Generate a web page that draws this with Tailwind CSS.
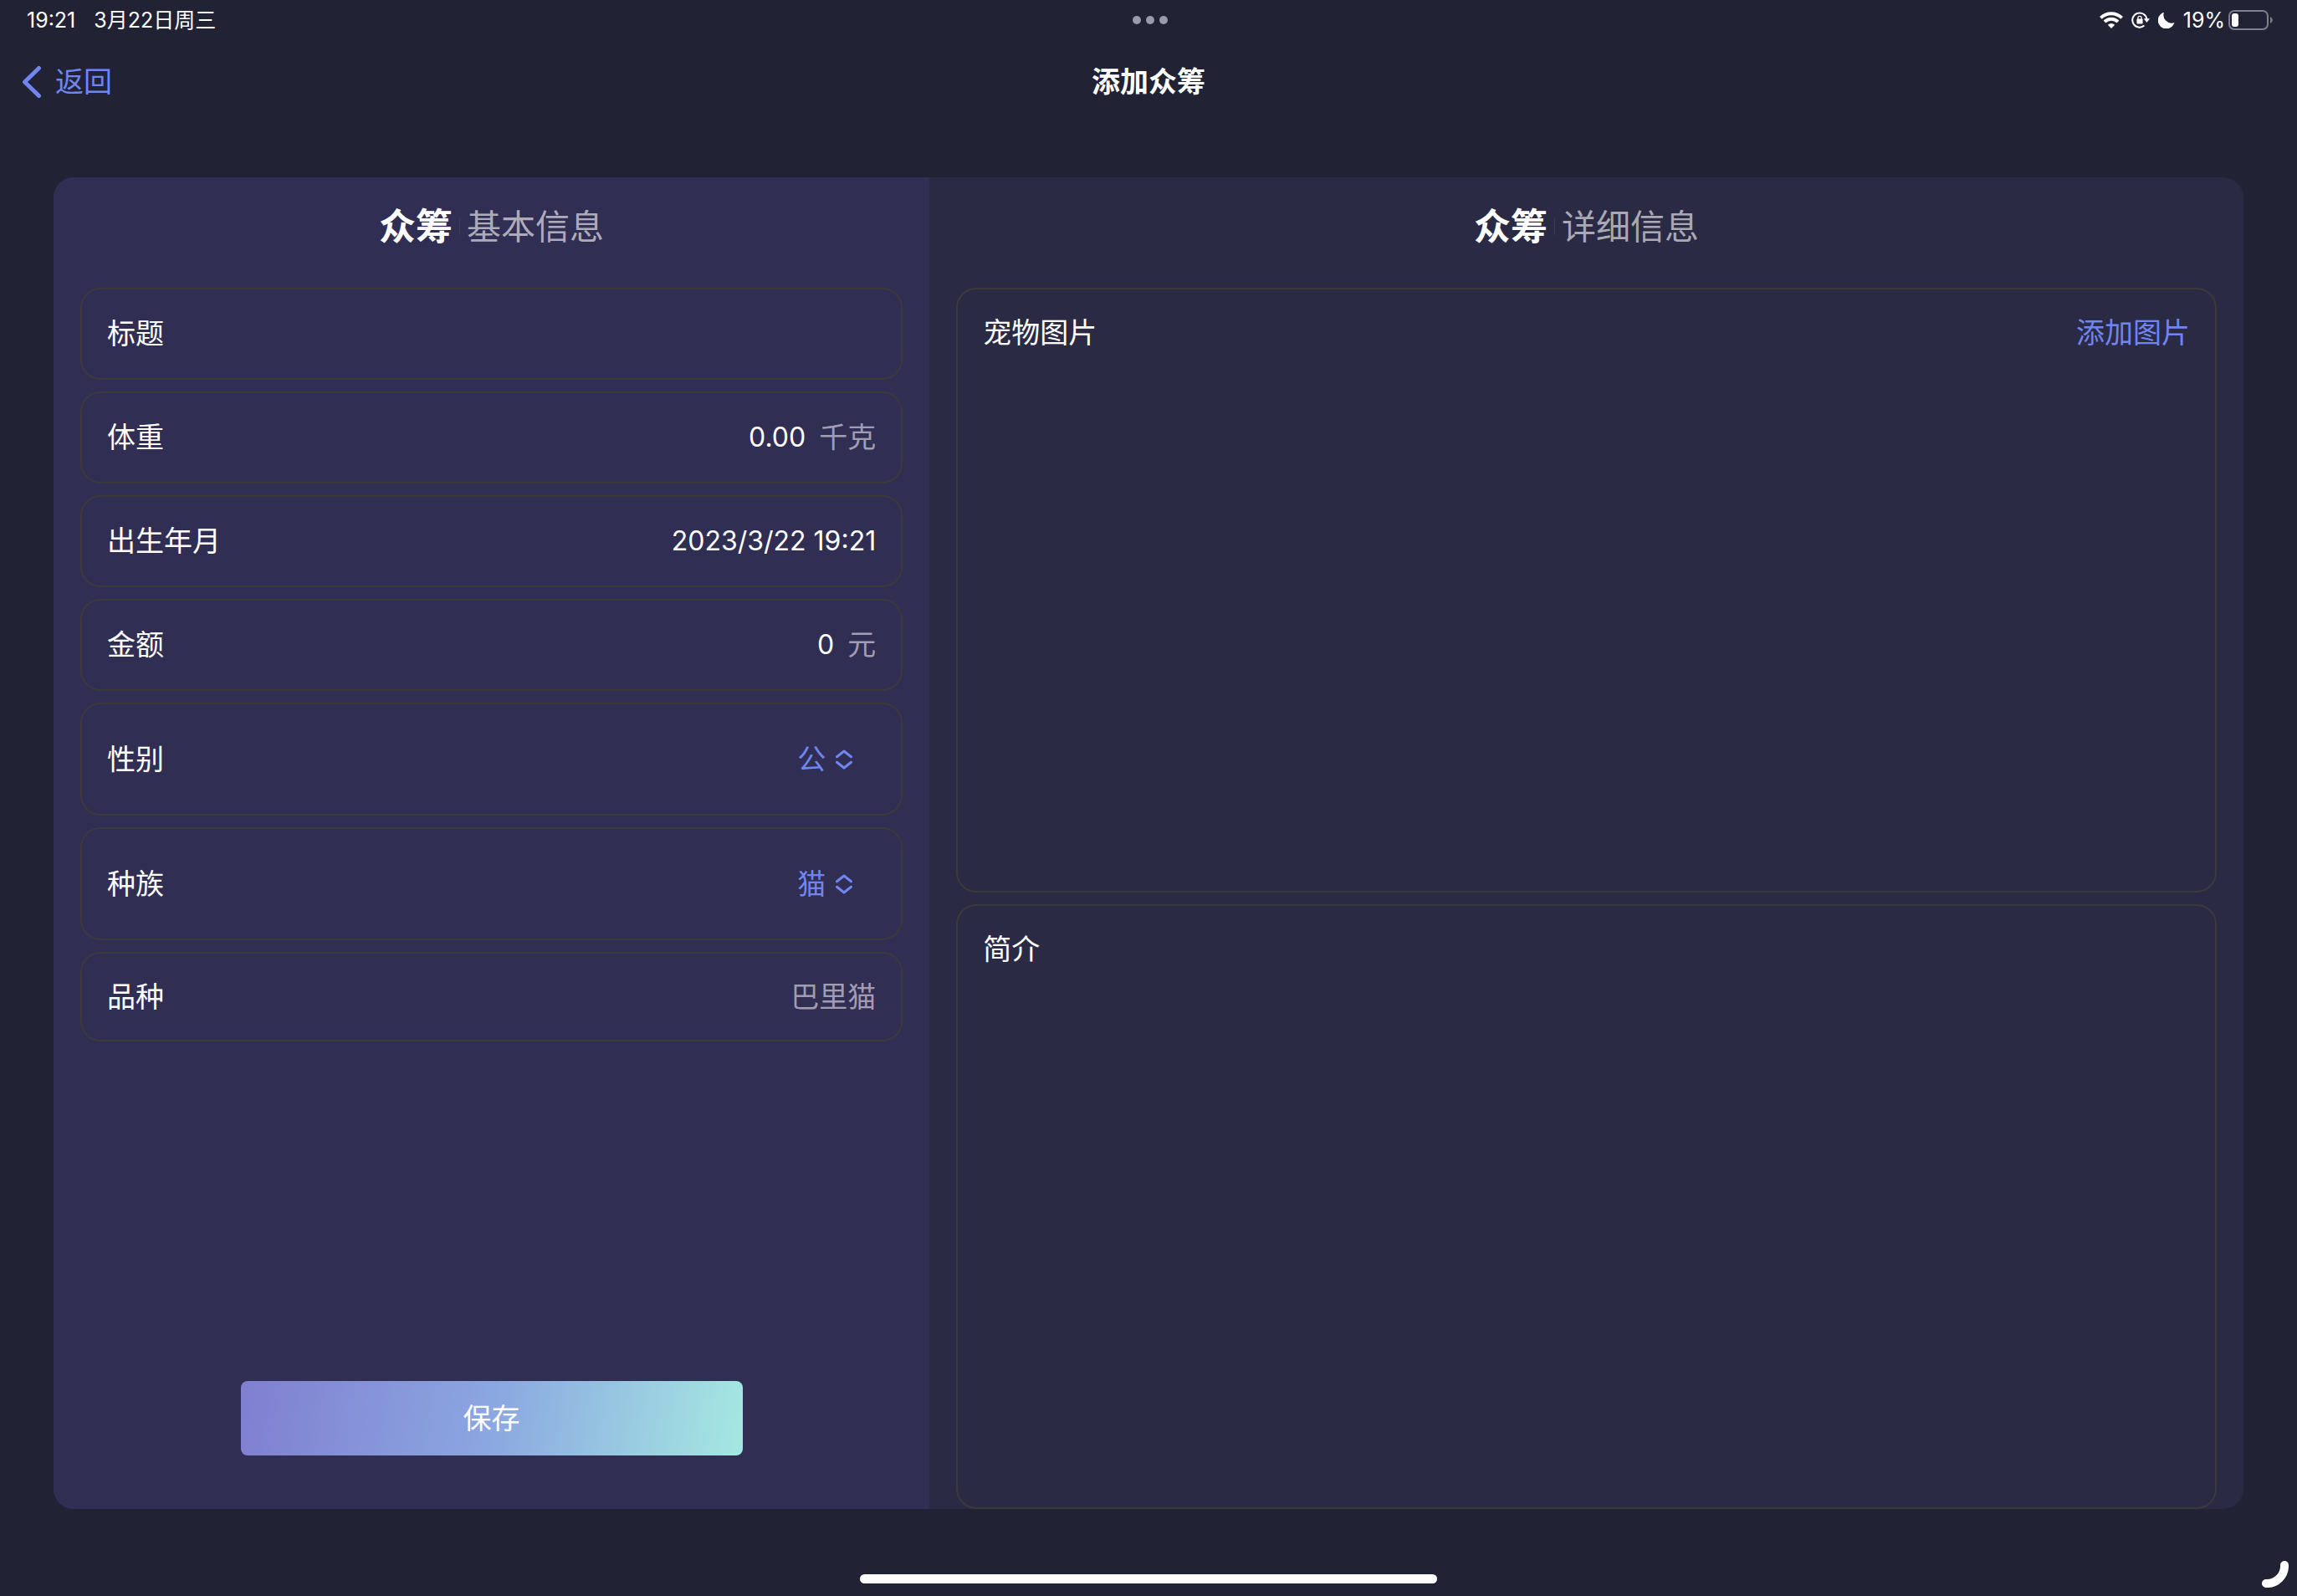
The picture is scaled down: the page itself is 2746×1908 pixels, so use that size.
<!DOCTYPE html>
<html lang="zh-CN">
<head>
<meta charset="utf-8">
<meta name="viewport" content="width=device-width, initial-scale=1">
<title>添加众筹</title>
<script src="https://cdn.jsdelivr.net/npm/@tailwindcss/browser@4"></script>
</head>
<body class="relative flex min-h-screen flex-col bg-[#212233] font-['Inter','Noto_Sans_CJK_SC',sans-serif] text-[34px] leading-10 text-white">

<!-- Status bar -->
<div class="grid h-12 grid-cols-[1fr_auto_1fr] items-center pr-7 pl-8 text-[25px] leading-8">
  <div class="flex items-center gap-[22px]">
    <time>19:21</time>
    <span>3月22日周三</span>
  </div>
  <div class="flex gap-1.5">
    <span class="size-2.5 rounded-full bg-[#9a99ae]"></span>
    <span class="size-2.5 rounded-full bg-[#9a99ae]"></span>
    <span class="size-2.5 rounded-full bg-[#9a99ae]"></span>
  </div>
  <div class="flex items-center justify-end gap-2.5">
    <svg class="h-5 w-7" viewBox="0 0 28 20" fill="none" stroke="#fff" stroke-width="4" aria-label="Wi-Fi">
      <path d="M1.4 7.4a18 18 0 0 1 25.2 0"/>
      <path d="M6 12a11.4 11.4 0 0 1 16 0"/>
      <path d="M14 20l-4.2-4.2a6 6 0 0 1 8.4 0z" fill="#fff" stroke="none"/>
    </svg>
    <svg class="h-5 w-[22px]" viewBox="0 0 22 20" fill="none" aria-label="方向锁定">
      <path d="M15.400 16.600A8.600 8.600 0 1 1 18.400 9" stroke="#fff" stroke-width="2"/>
      <path d="M14.800 8.200h7.200l-3.600 4.800z" fill="#fff"/>
      <rect x="6.400" y="8.600" width="7.200" height="6" rx="1" fill="#fff"/>
      <path d="M7.900 9V7.400a2.100 2.100 0 0 1 4.200 0V9" stroke="#fff" stroke-width="1.300"/>
    </svg>
    <svg class="size-5" viewBox="0 0 20 20" aria-label="勿扰模式">
      <path d="M7 .8A10 10 0 1 0 19.4 13 9.6 9.6 0 0 1 7 .8z" fill="#fff"/>
    </svg>
    <div class="flex items-center gap-1">
      <span>19%</span>
      <svg class="h-6 w-[54px]" viewBox="0 0 54 24" fill="none" aria-label="电池">
        <rect x="1" y="1" width="46" height="22" rx="6" stroke="#7f7e8d" stroke-width="2"/>
        <rect x="4" y="4" width="8" height="16" rx="3" fill="#fff"/>
        <path d="M50 8c3.600 1.400 3.600 6.600 0 8z" fill="#7f7e8d"/>
      </svg>
    </div>
  </div>
</div>

<!-- Navigation bar -->
<header class="grid h-[100px] grid-cols-[1fr_auto_1fr] items-center px-6">
  <a href="#" class="flex items-center gap-4 justify-self-start text-[#7085f0]">
    <svg class="h-10 w-[26px]" viewBox="0 0 26 40" fill="none" stroke="currentColor" stroke-width="5" stroke-linecap="round" stroke-linejoin="round">
      <path d="M22.500 3.500L5.500 20l17 16.500"/>
    </svg>
    <span>返回</span>
  </a>
  <h1 class="font-semibold">添加众筹</h1>
</header>

<main class="flex flex-1 px-16 pt-16">
  <form class="flex flex-1 overflow-hidden rounded-3xl bg-[#2b2a45]">

    <!-- Basic information -->
    <section class="flex w-2/5 flex-col bg-[#312e53] px-8 pb-16">
      <h2 class="flex h-[132px] items-center justify-center gap-2 pb-3.5 text-[41px] leading-[60px] text-[#adabba]">
        <strong class="text-[44px] font-bold text-white">众筹</strong>
        <span class="h-5 w-px bg-[#3d3b4c]"></span>
        <span>基本信息</span>
      </h2>

      <div class="flex flex-col gap-3.5">
        <div class="flex h-[110px] items-center gap-4 rounded-3xl border-2 border-[#3a3a3c] px-[30px]">
          <label for="title">标题</label>
          <input id="title" type="text" class="min-w-0 flex-1 bg-transparent text-right outline-none">
        </div>
        <div class="flex h-[110px] items-center gap-4 rounded-3xl border-2 border-[#3a3a3c] px-[30px]">
          <label for="weight">体重</label>
          <input id="weight" type="text" inputmode="decimal" value="0.00" class="min-w-0 flex-1 bg-transparent text-right text-[32px] outline-none">
          <span class="text-[#a09db3]">千克</span>
        </div>
        <div class="flex h-[110px] items-center gap-4 rounded-3xl border-2 border-[#3a3a3c] px-[30px]">
          <label for="birth">出生年月</label>
          <input id="birth" type="text" value="2023/3/22 19:21" class="min-w-0 flex-1 bg-transparent text-right text-[32px] outline-none">
        </div>
        <div class="flex h-[110px] items-center gap-4 rounded-3xl border-2 border-[#3a3a3c] px-[30px]">
          <label for="amount">金额</label>
          <input id="amount" type="text" inputmode="numeric" value="0" class="min-w-0 flex-1 bg-transparent text-right text-[32px] outline-none">
          <span class="text-[#a09db3]">元</span>
        </div>
        <div class="flex h-[135px] items-center justify-between rounded-3xl border-2 border-[#3a3a3c] px-[30px]">
          <label for="sex">性别</label>
          <div class="flex items-center gap-3 pr-7 text-[#7085f0]">
            <select id="sex" class="field-sizing-content appearance-none bg-transparent outline-none">
              <option selected>公</option>
              <option>母</option>
            </select>
            <svg class="h-6 w-5" viewBox="0 0 20 24" fill="none" stroke="currentColor" stroke-width="3" stroke-linecap="round" stroke-linejoin="round">
              <path d="M1.500 8.700L10 2l8.500 6.700M1.500 15.300L10 22l8.500-6.700"/>
            </svg>
          </div>
        </div>
        <div class="flex h-[135px] items-center justify-between rounded-3xl border-2 border-[#3a3a3c] px-[30px]">
          <label for="species">种族</label>
          <div class="flex items-center gap-3 pr-7 text-[#7085f0]">
            <select id="species" class="field-sizing-content appearance-none bg-transparent outline-none">
              <option selected>猫</option>
              <option>狗</option>
            </select>
            <svg class="h-6 w-5" viewBox="0 0 20 24" fill="none" stroke="currentColor" stroke-width="3" stroke-linecap="round" stroke-linejoin="round">
              <path d="M1.500 8.700L10 2l8.500 6.700M1.500 15.300L10 22l8.500-6.700"/>
            </svg>
          </div>
        </div>
        <div class="flex h-[107px] items-center gap-4 rounded-3xl border-2 border-[#3a3a3c] px-[30px]">
          <label for="breed">品种</label>
          <input id="breed" type="text" placeholder="巴里猫" class="min-w-0 flex-1 bg-transparent text-right outline-none placeholder:text-[#a09db3]">
        </div>
      </div>

      <button type="submit" class="mt-auto h-[89px] w-[600px] max-w-full self-center rounded-lg bg-[linear-gradient(98deg,#807fd0,#8ba7e1,#a5e8e1)]">保存</button>
    </section>

    <!-- Detailed information -->
    <section class="flex w-3/5 flex-col px-8">
      <h2 class="flex h-[132px] items-center justify-center gap-2 pb-3.5 text-[41px] leading-[60px] text-[#a9a8b4]">
        <strong class="text-[44px] font-bold text-white">众筹</strong>
        <span class="h-5 w-px bg-[#3d3b4c]"></span>
        <span>详细信息</span>
      </h2>

      <div class="flex flex-1 flex-col gap-3.5">
        <div class="flex-1 rounded-3xl border-2 border-[#3a3a3c] px-[30px] py-8">
          <div class="flex items-center justify-between">
            <h3>宠物图片</h3>
            <button type="button" class="text-[#7085f0]">添加图片</button>
          </div>
        </div>
        <div class="flex flex-1 flex-col rounded-3xl border-2 border-[#3a3a3c] px-[30px] py-8">
          <label for="intro">简介</label>
          <textarea id="intro" class="min-h-0 flex-1 resize-none bg-transparent outline-none"></textarea>
        </div>
      </div>
    </section>
  </form>
</main>

<!-- Home indicator -->
<footer class="flex h-[104px] items-end justify-center pb-[15px]">
  <div class="h-[11px] w-[690px] rounded-full bg-white"></div>
</footer>
<svg class="absolute right-2.5 bottom-2.5 size-8" viewBox="0 0 32 32" fill="none" stroke="#fff" stroke-width="10" stroke-linecap="round" aria-hidden="true">
  <path d="M27 5A21 21 0 0 1 5 27"/>
</svg>
</body>
</html>
